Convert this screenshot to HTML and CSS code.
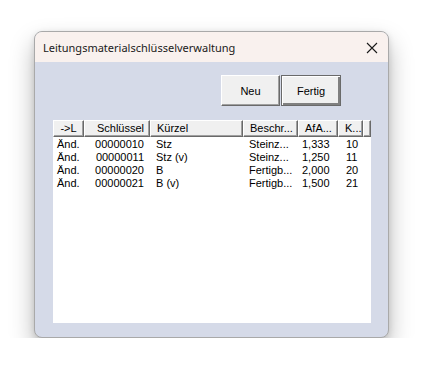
FILE: index.html
```html
<!doctype html>
<html lang="de">
<head>
    <meta charset="utf-8">
    <title>Leitungsmaterialschlüsselverwaltung</title>
    <link rel="stylesheet" href="styles.css">
</head>
<body>

    <div class="window">
        <div class="titlebar">
            <span class="title">Leitungsmaterialschlüsselverwaltung</span>
            <svg class="close" width="12" height="12" viewBox="0 0 12 12">
                <path d="M1 1 L11 11 M11 1 L1 11" stroke="#1a1a1a" stroke-width="1.1" fill="none"/>
            </svg>
        </div>

        <div class="content">
            <div class="toolbar">
                <button class="btn">Neu</button>
                <button class="btn default">Fertig</button>
            </div>

            <div class="list">
                <div class="head">
                    <div class="col c1 center">-&gt;L</div>
                    <div class="col c2 right">Schlüssel</div>
                    <div class="col c3">Kürzel</div>
                    <div class="col c4">Beschr...</div>
                    <div class="col c5">AfA...</div>
                    <div class="col c6">K...</div>
                    <div class="col c7"></div>
                </div>
                <div class="row">
                    <div class="cell c1">Änd.</div>
                    <div class="cell c2 right">00000010</div>
                    <div class="cell c3">Stz</div>
                    <div class="cell c4">Steinz...</div>
                    <div class="cell c5">1,333</div>
                    <div class="cell c6">10</div>
                </div>
                <div class="row">
                    <div class="cell c1">Änd.</div>
                    <div class="cell c2 right">00000011</div>
                    <div class="cell c3">Stz (v)</div>
                    <div class="cell c4">Steinz...</div>
                    <div class="cell c5">1,250</div>
                    <div class="cell c6">11</div>
                </div>
                <div class="row">
                    <div class="cell c1">Änd.</div>
                    <div class="cell c2 right">00000020</div>
                    <div class="cell c3">B</div>
                    <div class="cell c4">Fertigb...</div>
                    <div class="cell c5">2,000</div>
                    <div class="cell c6">20</div>
                </div>
                <div class="row">
                    <div class="cell c1">Änd.</div>
                    <div class="cell c2 right">00000021</div>
                    <div class="cell c3">B (v)</div>
                    <div class="cell c4">Fertigb...</div>
                    <div class="cell c5">1,500</div>
                    <div class="cell c6">21</div>
                </div>
            </div>
        </div>
    </div>

</body>
</html>
```

FILE: styles.css
```css
html {
    width: 100%;
    height: 100%;
}

body {
    margin: 0;
    padding: 31px 0 0 34px;
    background-color: #fff;
    font-family: 'Liberation Sans', Arial, sans-serif;
    font-size: 11px;
    color: #000;
}

.window {
    width: 353px;
    height: 305px;
    border: 1px solid #a9a9a9;
    border-radius: 8px;
    overflow: hidden;
    background-color: #d5dae8;
    box-shadow: 0 12px 24px rgba(0, 0, 0, 0.28), 0 2px 6px rgba(0, 0, 0, 0.12);
    display: flex;
    flex-direction: column;
}

.titlebar {
    height: 30px;
    flex: none;
    display: flex;
    align-items: center;
    justify-content: space-between;
    padding: 0 10px 0 8px;
    background-color: #f9f1ee;
}

.title {
    font-family: 'Noto Sans', 'Open Sans', sans-serif;
    font-size: 11px;
    color: #1a1a1a;
}

.close {
    margin-top: 1px;
}

.content {
    flex: 1;
    padding: 13px 0 0 18px;
}

.toolbar {
    display: flex;
    gap: 1px;
    margin-left: 168px;
}

.btn {
    width: 59px;
    height: 31px;
    padding: 0;
    margin: 0;
    font-family: 'Liberation Sans', Arial, sans-serif;
    font-size: 11px;
    color: #000;
    background-color: #f0f0f0;
    border: 1px solid;
    border-color: #fff #6a6a6a #6a6a6a #fff;
    box-shadow: inset -1px -1px 0 #a0a0a0;
}

.btn.default {
    width: 60px;
    border: 1px solid #6a6a6a;
    box-shadow: inset 1px 1px 0 #fff, inset -2px -2px 0 #808080;
}

.list {
    width: 318px;
    height: 203px;
    margin-top: 14px;
    background-color: #fff;
}

.head {
    display: flex;
    height: 17px;
}

.col {
    height: 17px;
    box-sizing: border-box;
    line-height: 15px;
    padding-left: 6px;
    background-color: #f0f0f0;
    border-top: 1px solid #fff;
    border-left: 1px solid #fff;
    border-right: 1px solid #696969;
    border-bottom: 1px solid #696969;
    box-shadow: inset -1px -1px 0 #a0a0a0;
    white-space: nowrap;
    overflow: hidden;
}

.row {
    display: flex;
    height: 13px;
    line-height: 13px;
}

.head + .row {
    margin-top: 1px;
}

.cell {
    padding-left: 6px;
    box-sizing: border-box;
    white-space: nowrap;
}

.c1 { width: 31px; }
.c2 { width: 66px; }
.c3 { width: 93px; }
.c4 { width: 55px; }
.c5 { width: 40px; }
.c6 { width: 25px; }
.c7 { flex: 1; }

.cell.c1 { padding-left: 4px; }
.cell.c5 { padding-left: 4px; }
.cell.c6 { padding-left: 8px; }

.center {
    text-align: center;
    padding-left: 0;
}

.right {
    text-align: right;
    padding-left: 0;
    padding-right: 5px;
}

.cell.right {
    padding-right: 6px;
}
```
